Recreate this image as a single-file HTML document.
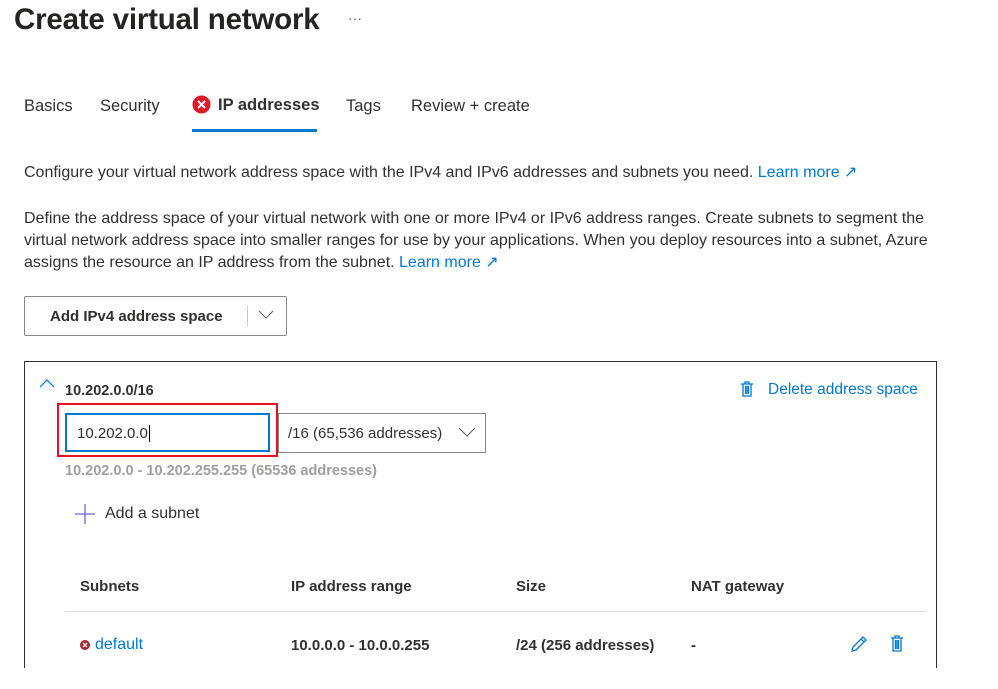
<!DOCTYPE html>
<html><head><meta charset="utf-8"><style>
body{margin:0;width:998px;height:689px;background:#fff;font-family:"Liberation Sans",sans-serif;color:#323130;position:relative;overflow:hidden}
.a{position:absolute;white-space:nowrap}
.l{color:#0078d4}
.t{font-size:16px}
</style></head><body>
<div class="a" style="left:14px;top:3px;font-size:29.5px;font-weight:600;color:#252423;letter-spacing:-0.2px">Create virtual network</div>
<div class="a" style="left:348px;top:10px;font-size:14px;color:#605e5c">···</div>

<div class="a" style="left:24px;top:97px;font-size:16.5px">Basics</div>
<div class="a" style="left:100px;top:97px;font-size:16.5px">Security</div>
<svg class="a" style="left:192px;top:95px" width="19" height="19"><circle cx="9.5" cy="9.5" r="9" fill="#d91c2b"/><path d="M6 6L13 13M13 6L6 13" stroke="#fff" stroke-width="2"/></svg>
<div class="a" style="left:218px;top:96px;font-size:16.5px;font-weight:600">IP addresses</div>
<div class="a" style="left:192px;top:129px;width:125px;height:3px;background:#0078d4"></div>
<div class="a" style="left:346px;top:97px;font-size:16.5px">Tags</div>
<div class="a" style="left:411px;top:97px;font-size:16.5px">Review + create</div>

<div class="a t" style="left:24px;top:162px">Configure your virtual network address space with the IPv4 and IPv6 addresses and subnets you need. <span class="l">Learn more ↗</span></div>
<div class="a t" style="left:24px;top:208px;line-height:22px">Define the address space of your virtual network with one or more IPv4 or IPv6 address ranges. Create subnets to segment the<br>virtual network address space into smaller ranges for use by your applications. When you deploy resources into a subnet, Azure<br>assigns the resource an IP address from the subnet. <span class="l">Learn more ↗</span></div>

<div class="a" style="left:24px;top:296px;width:261px;height:38px;border:1px solid #8a8886;border-radius:2px"></div>
<div class="a" style="left:50px;top:308px;font-size:15px;font-weight:600">Add IPv4 address space</div>
<div class="a" style="left:247px;top:306px;width:1px;height:20px;background:#c8c6c4"></div>
<svg class="a" style="left:258px;top:310px" width="16" height="10"><path d="M1 1L8 8L15 1" fill="none" stroke="#605e5c" stroke-width="1"/></svg>

<div class="a" style="left:24px;top:361px;width:911px;height:306px;border:1px solid #323130;border-bottom:none"></div>
<svg class="a" style="left:39px;top:379px" width="16" height="10"><path d="M1 8L8 1L15 8" fill="none" stroke="#0078d4" stroke-width="1.2"/></svg>
<div class="a" style="left:65px;top:383px;font-size:14.5px;font-weight:600">10.202.0.0/16</div>
<svg class="a" style="left:740px;top:381px" width="14" height="16"><path d="M1 3H13M5 3V1H9V3M3 3V15H11V3M5.5 5V13M7 5V13M8.5 5V13" fill="none" stroke="#0078d4" stroke-width="1.3"/></svg>
<div class="a l" style="left:768px;top:381px;font-size:15.5px">Delete address space</div>

<div class="a" style="left:57px;top:403px;width:221px;height:54px;border:2px solid #e81123;box-sizing:border-box"></div>
<div class="a" style="left:65px;top:413px;width:205px;height:39px;border:2px solid #0078d4;box-sizing:border-box"></div>
<div class="a" style="left:77px;top:425px;font-size:15px">10.202.0.0<span style="border-left:1px solid #000;margin-left:1px"></span></div>
<div class="a" style="left:278px;top:413px;width:206px;height:38px;border:1px solid #8a8886"></div>
<div class="a" style="left:288px;top:425px;font-size:15px">/16 (65,536 addresses)</div>
<svg class="a" style="left:458px;top:427px" width="18" height="10"><path d="M1 1L9 9L17 1" fill="none" stroke="#605e5c" stroke-width="1"/></svg>
<div class="a" style="left:65px;top:463px;font-size:14.5px;font-weight:600;color:#a19f9d">10.202.0.0 - 10.202.255.255 (65536 addresses)</div>

<svg class="a" style="left:75px;top:504px" width="20" height="20"><path d="M10 0V20M0 10H20" stroke="#6b69d6" stroke-width="1.3"/></svg>
<div class="a" style="left:105px;top:505px;font-size:16px">Add a subnet</div>

<div class="a" style="left:80px;top:578px;font-size:15px;font-weight:600">Subnets</div>
<div class="a" style="left:291px;top:578px;font-size:15px;font-weight:600">IP address range</div>
<div class="a" style="left:516px;top:578px;font-size:15px;font-weight:600">Size</div>
<div class="a" style="left:691px;top:578px;font-size:15px;font-weight:600">NAT gateway</div>
<div class="a" style="left:65px;top:611px;width:861px;height:1px;background:#e1dfdd"></div>

<svg class="a" style="left:80px;top:640px" width="10" height="10"><circle cx="5" cy="5" r="5" fill="#a4262c"/><path d="M3 3L7 7M7 3L3 7" stroke="#fff" stroke-width="1.3"/></svg>
<div class="a l" style="left:95px;top:636px;font-size:16px">default</div>
<div class="a" style="left:291px;top:637px;font-size:15px;font-weight:600">10.0.0.0 - 10.0.0.255</div>
<div class="a" style="left:516px;top:637px;font-size:15px;font-weight:600">/24 (256 addresses)</div>
<div class="a" style="left:691px;top:637px;font-size:15px;font-weight:600">-</div>
<svg class="a" style="left:850px;top:635px" width="18" height="18"><path d="M2 16L3 12L13 2L16 5L6 15Z M11 4L14 7" fill="none" stroke="#0078d4" stroke-width="1.3"/></svg>
<svg class="a" style="left:890px;top:635px" width="14" height="17"><path d="M1 3H13M5 3V1H9V3M3 3V16H11V3M5.5 5V14M7 5V14M8.5 5V14" fill="none" stroke="#0078d4" stroke-width="1.3"/></svg>
</body></html>
